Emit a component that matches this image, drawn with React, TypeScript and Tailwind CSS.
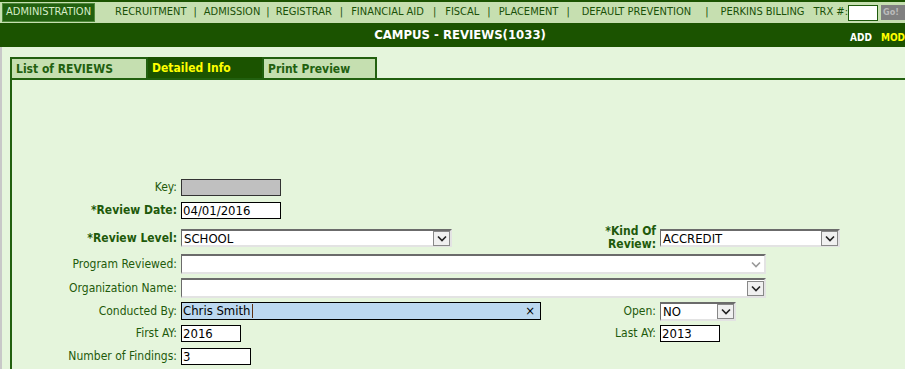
import React from "react";

const FONT = { fontFamily: "Tahoma, 'DejaVu Sans Condensed', 'DejaVu Sans', sans-serif" };

function Chevron({ color = "#222" }: { color?: string }) {
  return (
    <svg width="10" height="7" viewBox="0 0 10 7">
      <polyline points="1,1.5 5,5.5 9,1.5" fill="none" stroke={color} strokeWidth="1.6" />
    </svg>
  );
}

function Select({ w, h = 18, value, boxed = true, disabledArrow = false }: { w: number; h?: number; value?: string; boxed?: boolean; disabledArrow?: boolean }) {
  return (
    <div
      className="flex items-center bg-white border-t-2 border-l border-t-[#6b6b6b] border-l-[#6b6b6b] border-b-2 border-r-2 border-b-[#e3e3e3] border-r-[#e3e3e3] box-border"
      style={{ width: w, height: h }}
    >
      <div className="flex-1 pl-[2px] text-[13px] text-black leading-none whitespace-nowrap overflow-hidden">{value}</div>
      {disabledArrow ? (
        <div className="w-[17px] h-full flex items-center justify-center">
          <Chevron color="#999" />
        </div>
      ) : boxed ? (
        <div className="w-[17px] h-[15px] flex items-center justify-center border border-[#888] bg-[#f0f0f0]">
          <Chevron />
        </div>
      ) : null}
    </div>
  );
}

function TextInput({ w, value, bg = "bg-white" }: { w: number; value?: string; bg?: string }) {
  return (
    <div className={`h-[17px] border border-black box-border flex items-center pl-[1px] text-[13px] text-black leading-none ${bg}`} style={{ width: w }}>
      {value}
    </div>
  );
}

function Label({ children, bold = false, w = 165 }: { children: React.ReactNode; bold?: boolean; w?: number }) {
  return (
    <div
      className={`text-right text-[12px] leading-[13px] text-[#1e5a0b] shrink-0 whitespace-nowrap ${bold ? "font-bold" : ""}`}
      style={{ width: w }}
    >
      {children}
    </div>
  );
}

export default function App() {
  return (
    <div className="w-[905px] h-[369px] overflow-hidden bg-[#e5f5dc] flex flex-col" style={FONT}>
      {/* top nav */}
      <div className="h-[2px] bg-[#1b5300]" />
      <div className="h-[21px] bg-[#c6dfb0] flex items-center text-[11px] text-[#1a5008] whitespace-nowrap">
        <div className="ml-[2px] h-[19px] w-[97px] bg-[#22600f] border border-[#4f8a3a] text-[#d7ecc8] flex items-center justify-center">ADMINISTRATION</div>
        <div className="flex items-center ml-[20px]">
          <span>RECRUITMENT</span>
          <span className="mx-[7px]">|</span>
          <span>ADMISSION</span>
          <span className="mx-[6px]">|</span>
          <span>REGISTRAR</span>
          <span className="mx-[8px]">|</span>
          <span>FINANCIAL AID</span>
          <span className="mx-[9px]">|</span>
          <span>FISCAL</span>
          <span className="mx-[8px]">|</span>
          <span>PLACEMENT</span>
          <span className="ml-[8px] mr-[12px]">|</span>
          <span>DEFAULT PREVENTION</span>
          <span className="ml-[14px] mr-[12px]">|</span>
          <span>PERKINS BILLING</span>
          <span className="ml-[9px]">TRX #:</span>
          <div className="w-[30px] h-[16px] bg-white border border-[#1e5a0c]" />
          <div className="ml-[3px] w-[24px] h-[15px] bg-[#808080] text-[#bbb] text-[9px] font-bold flex items-center pl-[2px]">Go!</div>
        </div>
      </div>
      {/* title bar */}
      <div className="h-[24px] bg-[#1b5300] relative flex items-center justify-center">
        <span className="text-white font-bold text-[13px] ml-[15px]">CAMPUS - REVIEWS(1033)</span>
        <div className="absolute right-0 top-[7px] flex text-[10px] font-bold whitespace-nowrap">
          <span className="text-white mr-[9px]">ADD</span>
          <span className="text-[#ffff00] w-[24px] overflow-hidden">MODI</span>
        </div>
      </div>
      {/* body */}
      <div className="flex-1 flex">
        <div className="w-[2px] bg-[#c8c8c8]" />
        <div className="flex-1 pl-[8px] pt-[10px] flex flex-col">
          {/* tabs */}
          <div className="flex h-[21px] items-stretch text-[12px] font-bold">
            <div className="w-[138px] bg-[#c5dfb0] border-2 border-[#22600f] border-b-0 text-[#22600f] flex items-center pl-[4px]">List of REVIEWS</div>
            <div className="w-[114px] bg-[#1b5300] text-[#ffff00] flex items-center pl-[4px]">Detailed Info</div>
            <div className="w-[115px] bg-[#c5dfb0] border-2 border-[#22600f] border-b-0 text-[#22600f] flex items-center pl-[4px]">Print Preview</div>
          </div>
          <div className="flex-1 border-t-2 border-l-2 border-[#22600f] pt-[99px]">
            <div className="flex items-center h-[17px]">
              <Label>Key:</Label>
              <div className="ml-[4px] w-[100px] h-[17px] bg-[#c0c0c0] border border-[#333]" />
            </div>
            <div className="flex items-center h-[17px] mt-[6px]">
              <Label bold>*Review Date:</Label>
              <div className="ml-[4px]"><TextInput w={100} value="04/01/2016" /></div>
            </div>
            <div className="flex items-center h-[18px] mt-[10px]">
              <div className="flex items-center w-[588px]">
                <Label bold>*Review Level:</Label>
                <div className="ml-[4px]"><Select w={271} value="SCHOOL" /></div>
              </div>
              <Label bold w={56}>*Kind Of<br />Review:</Label>
              <div className="ml-[4px]"><Select w={180} value="ACCREDIT" /></div>
            </div>
            <div className="flex items-center h-[20px] mt-[7px]">
              <Label>Program Reviewed:</Label>
              <div className="ml-[4px]"><Select w={585} h={20} disabledArrow /></div>
            </div>
            <div className="flex items-center h-[20px] mt-[4px]">
              <Label>Organization Name:</Label>
              <div className="ml-[4px]"><Select w={585} h={20} /></div>
            </div>
            <div className="flex items-center h-[18px] mt-[4px]">
              <div className="flex items-center w-[588px]">
                <Label>Conducted By:</Label>
                <div className="ml-[4px] w-[360px] h-[18px] border border-black bg-[#bcd8f0] flex items-center pl-[1px] text-[13px] text-black relative">
                  <span>Chris Smith</span>
                  <span className="w-px h-[14px] bg-[#603010] ml-[1px]" />
                  <span className="absolute right-[5px] top-0 text-[13px] leading-[16px]">×</span>
                </div>
              </div>
              <Label w={56}>Open:</Label>
              <div className="ml-[4px]"><Select w={76} h={19} value="NO" /></div>
            </div>
            <div className="flex items-center h-[17px] mt-[5px]">
              <div className="flex items-center w-[588px]">
                <Label>First AY:</Label>
                <div className="ml-[4px]"><TextInput w={60} value="2016" /></div>
              </div>
              <Label w={56}>Last AY:</Label>
              <div className="ml-[4px]"><TextInput w={60} value="2013" /></div>
            </div>
            <div className="flex items-center h-[17px] mt-[6px]">
              <Label>Number of Findings:</Label>
              <div className="ml-[4px]"><TextInput w={70} value="3" /></div>
            </div>
          </div>
        </div>
      </div>
    </div>
  );
}
